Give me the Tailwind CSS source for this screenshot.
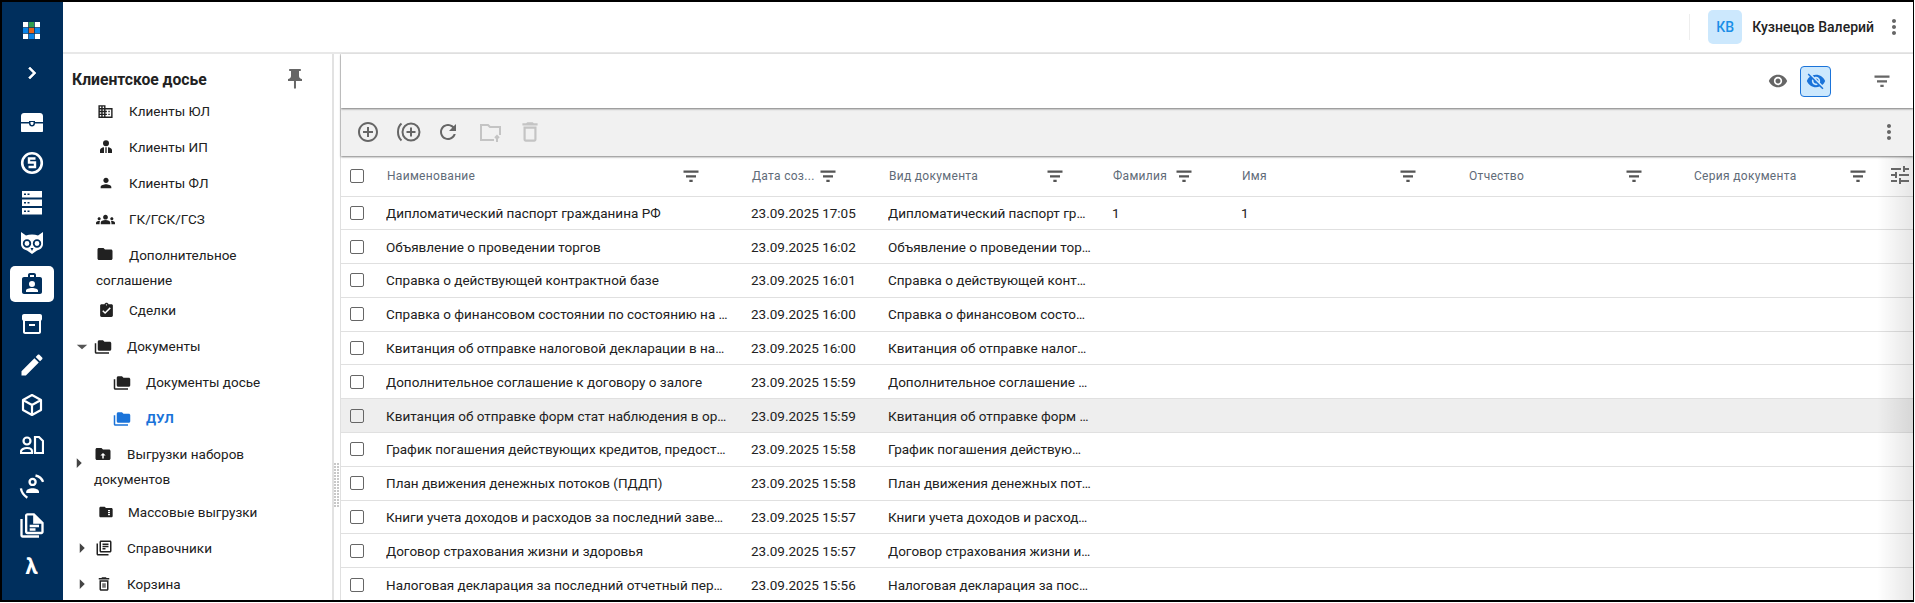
<!DOCTYPE html>
<html lang="en">
<head>
  <meta charset="UTF-8" />
  <title>Клиентское досье</title>
  <script src="https://cdn.jsdelivr.net/npm/@tailwindcss/browser@4"></script>
</head>
<body class="bg-white overflow-hidden font-['Roboto',sans-serif]">

<!-- icon sprite -->
<svg class="hidden">
  <symbol id="filter" viewBox="0 0 24 24"><path d="M3 5.500h18v2.700H3zM6 11h12v2.700H6zM10 16.500h4v2.700h-4z"/></symbol>
  <symbol id="more" viewBox="0 0 24 24"><path d="M12 8c1.100 0 2-.9 2-2s-.9-2-2-2-2 .9-2 2 .9 2 2 2zm0 2c-1.100 0-2 .9-2 2s.9 2 2 2 2-.9 2-2-.9-2-2-2zm0 6c-1.100 0-2 .9-2 2s.9 2 2 2 2-.9 2-2-.9-2-2-2z"/></symbol>
  <symbol id="folders" viewBox="0 0 24 24"><path d="M3 19h17v2H3c-1.100 0-2-.9-2-2V7h2v12zM23 7v8c0 1.100-.9 2-2 2H7c-1.100 0-2-.9-2-2l.01-10c0-1.100.89-2 1.990-2h5l2 2h7c1.100 0 2 .9 2 2z"/></symbol>
  <symbol id="right" viewBox="0 0 24 24"><path d="M9 5.500v13l6.700-6.500z"/></symbol>
  <symbol id="folder" viewBox="0 0 24 24"><path d="M10 4H4c-1.100 0-1.990.9-1.990 2L2 18c0 1.100.9 2 2 2h16c1.100 0 2-.9 2-2V8c0-1.100-.9-2-2-2h-8l-2-2z"/></symbol>
</svg>

<div class="w-[1914px] h-[602px] border-t-2 border-l-2 border-r border-b-2 border-black flex overflow-hidden">

  <!-- Left rail -->
  <nav class="w-[61px] shrink-0 bg-[#002f5d] text-white flex flex-col items-center pr-[2px]">
    <div class="h-[56px] flex items-center justify-center">
      <svg width="17" height="17" viewBox="0 0 17 17">
        <rect width="5.200" height="5.200" fill="#fff"/><rect x="5.900" width="5.200" height="5.200" fill="#2e9e4f"/><rect x="11.800" width="5.200" height="5.200" fill="#fff"/>
        <rect y="5.900" width="5.200" height="5.200" fill="#0a84e6"/><rect x="5.900" y="5.900" width="5.200" height="5.200" fill="#e8641b"/><rect x="11.800" y="5.900" width="5.200" height="5.200" fill="#0a84e6"/>
        <rect y="11.800" width="5.200" height="5.200" fill="#fff"/><rect x="5.900" y="11.800" width="5.200" height="5.200" fill="#0a84e6"/><rect x="11.800" y="11.800" width="5.200" height="5.200" fill="#fff"/>
      </svg>
    </div>
    <div class="h-[30px] flex items-center justify-center">
      <svg class="w-6 h-6" viewBox="0 0 24 24" fill="#fff" stroke="#fff" stroke-width=".6"><path d="M10 6L8.590 7.410 13.170 12l-4.580 4.590L10 18l6-6z"/></svg>
    </div>
    <div class="h-[14px]"></div>

    <div class="h-[40.4px] flex items-center justify-center">
      <svg class="w-[22px] h-[20px]" viewBox="0 0 22 20" fill="#fff"><path d="M3 1h16c1.500 0 3 1 3 3v6h-8V9H8v1H0V4c0-2 1.500-3 3-3zM0 11.500h8c0 1.700 1.300 3 3 3s3-1.300 3-3h8V19c0 .6-.4 1-1 1H1c-.6 0-1-.4-1-1zM9.500 10h3v1.500c0 .8-.7 1.500-1.500 1.500s-1.500-.7-1.500-1.500z"/></svg>
    </div>
    <div class="h-[40.4px] flex items-center justify-center">
      <svg class="w-6 h-6" viewBox="0 0 24 24" fill="none" stroke="#fff"><circle cx="12" cy="12" r="9.800" stroke-width="2.600"/><path d="M15.500 7.500h-6.500v4h6v4.500h-6.500" stroke-width="2.400"/></svg>
    </div>
    <div class="h-[40.4px] flex items-center justify-center">
      <svg class="w-[20px] h-[24px]" viewBox="0 0 20 24" fill="#fff"><path d="M0 0h20v6.500H0zM0 8.500h20V15H0zM0 17h20v6.500H0z"/><path fill="#002f5d" d="M2 2.500h2v1.500H2zM5.500 2.500h2v1.500h-2zM2 11h2v1.500H2zM5.500 11h2v1.500h-2zM2 19.500h2V21H2zM5.500 19.500h2V21h-2z"/></svg>
    </div>
    <div class="h-[40.4px] flex items-center justify-center">
      <svg class="w-6 h-6" viewBox="0 0 24 24"><path fill="#fff" d="M1 1l5 3.500c3.500-1.300 8.500-1.300 12 0L23 1v12c0 3.500-2.500 5.500-6 6.500L12 23l-5-3.500c-3.500-1-6-3-6-6.500z"/><circle cx="7" cy="12.500" r="3.300" fill="none" stroke="#002f5d" stroke-width="1.800"/><circle cx="17" cy="12.500" r="3.300" fill="none" stroke="#002f5d" stroke-width="1.800"/><path fill="#002f5d" d="M10.500 17h3L12 20z"/></svg>
    </div>
    <div class="h-[40.4px] flex items-center justify-center">
      <div class="w-[44px] h-[36px] bg-white rounded-[5px] flex items-center justify-center">
        <svg class="w-6 h-6" viewBox="0 0 24 24" fill="#002f5d"><path fill-rule="evenodd" d="M8 5V3c0-1.100.9-2 2-2h4c1.100 0 2 .9 2 2v2h4c1.100 0 2 .9 2 2v13c0 1.100-.9 2-2 2H4c-1.100 0-2-.9-2-2V7c0-1.100.9-2 2-2zm2 0h4V3h-4zm2 4a3 3 0 1 0 0 6 3 3 0 0 0 0-6zm-6 11h12v-1.500c0-1.500-3-2.500-6-2.500s-6 1-6 2.500z"/></svg>
      </div>
    </div>
    <div class="h-[40.4px] flex items-center justify-center">
      <svg class="w-6 h-6" viewBox="0 0 24 24" fill="#fff"><path d="M20 2H4c-1 0-2 .9-2 2v3.010c0 .72.43 1.340 1 1.690V20c0 1.100 1.100 2 2 2h14c.9 0 2-.9 2-2V8.700c.57-.35 1-.97 1-1.690V4c0-1.100-1-2-2-2zm-1 18H5V9h14zM9 12h6v2H9z"/></svg>
    </div>
    <div class="h-[40.4px] flex items-center justify-center">
      <svg class="w-7 h-7" viewBox="0 0 24 24" fill="#fff"><path d="M3 17.250V21h3.750L17.810 9.940l-3.750-3.750L3 17.250zM20.710 7.040c.39-.39.39-1.020 0-1.410l-2.340-2.340c-.39-.39-1.020-.39-1.410 0l-1.830 1.830 3.750 3.750 1.830-1.830z"/></svg>
    </div>
    <div class="h-[40.4px] flex items-center justify-center">
      <svg class="w-6 h-6" viewBox="0 0 24 24" fill="none" stroke="#fff" stroke-width="2.200" stroke-linejoin="round"><path d="M12 2l9 5v10l-9 5-9-5V7zM3 7l9 5 9-5M12 12v10"/></svg>
    </div>
    <div class="h-[40.4px] flex items-center justify-center">
      <svg class="w-6 h-6" viewBox="0 0 24 24" fill="none" stroke="#fff" stroke-width="2.200"><circle cx="7" cy="8" r="3.500"/><path d="M1 20v-1.500c0-2 3-3.500 6-3.500s5 1 5 3.500V20zM15 20V4h4l4 4v12z"/></svg>
    </div>
    <div class="h-[40.4px] flex items-center justify-center">
      <svg class="w-7 h-7" viewBox="0 0 24 24" fill="none" stroke="#fff" stroke-width="2"><circle cx="12.500" cy="8.500" r="2.600"/><path fill="#fff" stroke="none" d="M7 17c0-2 3-3 5.500-3s5.500 1 5.500 3v1H7z"/><path d="M15 3c3 .7 5.500 2.700 6.500 5.500M2.500 14c.5 3.500 2.500 6 5.500 8"/></svg>
    </div>
    <div class="h-[40.4px] flex items-center justify-center">
      <svg class="w-7 h-7" viewBox="0 0 24 24" fill="#fff"><path d="M4 6H2v14c0 1.100.9 2 2 2h14v-2H4V6zm10-5H8c-1.100 0-2 .9-2 2v14c0 1.100.9 2 2 2h12c1.100 0 2-.9 2-2V9zm6 16H8V3h5v7h7zM10 11h8v2h-8zm0 3h5v2h-5z"/></svg>
    </div>
    <div class="h-[40.4px] flex items-center justify-center text-[22px] font-bold">λ</div>
  </nav>

  <div class="flex-1 flex flex-col min-w-0">

    <!-- Top bar -->
    <header class="h-[52px] shrink-0 border-b-2 border-[#e8e8e8] flex items-center justify-end">
      <div class="w-px h-[26px] bg-[#eeeeee] mr-[18px]"></div>
      <div class="w-[34px] h-[34px] rounded-[5px] bg-[#cce8fd] text-[#1a8fe8] font-medium text-[14px] flex items-center justify-center">КВ</div>
      <span class="ml-[10px] text-[14px] font-medium text-[#222222]">Кузнецов Валерий</span>
      <svg class="w-6 h-6 ml-[8px] mr-[7px] text-[#666666]" fill="currentColor"><use href="#more"/></svg>
    </header>

    <div class="flex-1 flex min-h-0">

      <!-- Tree -->
      <aside class="w-[271px] shrink-0 border-r-2 border-[#e2e2e2] text-[13.500px] leading-[25px] text-[#212121]">
        <div class="h-[39px] pl-[9px] pr-[25px] flex items-center justify-between pt-[11px]">
          <span class="font-bold text-[15.700px] text-[#222222]">Клиентское досье</span>
          <svg class="w-6 h-6 text-[#666666]" viewBox="0 0 24 24" fill="currentColor"><path d="M16 9V4h1c.55 0 1-.45 1-1s-.45-1-1-1H7c-.55 0-1 .45-1 1s.45 1 1 1h1v5c0 1.660-1.340 3-3 3v2h5.970v7l1 1 1-1v-7H19v-2c-1.660 0-3-1.340-3-3z"/></svg>
        </div>
        <ul>
          <li class="h-[36px] pl-[34px] flex items-center">
            <svg class="w-[17px] h-[17px] mr-[15px]" viewBox="0 0 24 24" fill="#212121"><path d="M12 7V3H2v18h20V7H12zM6 19H4v-2h2v2zm0-4H4v-2h2v2zm0-4H4V9h2v2zm0-4H4V5h2v2zm4 12H8v-2h2v2zm0-4H8v-2h2v2zm0-4H8V9h2v2zm0-4H8V5h2v2zm10 12h-8v-2h2v-2h-2v-2h2v-2h-2V9h8v10zm-2-8h-2v2h2v-2zm0 4h-2v2h2v-2z"/></svg>Клиенты ЮЛ</li>
          <li class="h-[36px] pl-[35px] flex items-center">
            <svg class="w-[16px] h-[16px] mr-[15px]" viewBox="0 0 24 24" fill="#212121"><path d="M12 2a4.500 4.500 0 1 1 0 9 4.500 4.500 0 0 1 0-9zM3 21v-4c0-2.500 3-4 6-4.500V21zm8 0v-8.500h2V21zm4 0v-8.500c3 .5 6 2 6 4.500v4z"/></svg>Клиенты ИП</li>
          <li class="h-[36px] pl-[35px] flex items-center">
            <svg class="w-[16px] h-[16px] mr-[15px]" viewBox="0 0 24 24" fill="#212121"><path d="M12 12c2.210 0 4-1.790 4-4s-1.790-4-4-4-4 1.790-4 4 1.790 4 4 4zm0 2c-2.670 0-8 1.340-8 4v2h16v-2c0-2.660-5.330-4-8-4z"/></svg>Клиенты ФЛ</li>
          <li class="h-[36px] pl-[33px] flex items-center">
            <svg class="w-[19px] h-[19px] mr-[14px]" viewBox="0 0 24 24" fill="#212121"><path d="M12 12.750c1.630 0 3.070.39 4.240.9 1.080.48 1.760 1.560 1.760 2.730V18H6v-1.610c0-1.180.68-2.260 1.760-2.730 1.170-.52 2.610-.91 4.240-.91zM4 13c1.100 0 2-.9 2-2s-.9-2-2-2-2 .9-2 2 .9 2 2 2zm1.130 1.100c-.37-.06-.74-.1-1.130-.1-.99 0-1.930.21-2.780.58C.48 14.900 0 15.620 0 16.430V18h4.500v-1.610c0-.83.23-1.610.63-2.290zM20 13c1.100 0 2-.9 2-2s-.9-2-2-2-2 .9-2 2 .9 2 2 2zm4 3.430c0-.81-.48-1.530-1.220-1.850-.85-.37-1.790-.58-2.780-.58-.39 0-.76.04-1.130.1.4.68.63 1.460.63 2.290V18H24v-1.570zM12 6c1.660 0 3 1.340 3 3s-1.340 3-3 3-3-1.340-3-3 1.340-3 3-3z"/></svg>ГК/ГСК/ГСЗ</li>
          <li class="pl-[33px] pt-[5.500px] pr-[20px]">
            <svg class="inline w-[18px] h-[18px] mr-[15px] -mt-[3px]" fill="#212121"><use href="#folder"/></svg>Дополнительное соглашение</li>
          <li class="h-[36px] pl-[35px] flex items-center">
            <svg class="w-[17px] h-[17px] mr-[14px]" viewBox="0 0 24 24" fill="#212121"><path d="M19 3h-4.180C14.400 1.840 13.300 1 12 1c-1.300 0-2.400.84-2.820 2H5c-1.100 0-2 .9-2 2v14c0 1.100.9 2 2 2h14c1.100 0 2-.9 2-2V5c0-1.100-.9-2-2-2zm-7 0c.55 0 1 .45 1 1s-.45 1-1 1-1-.45-1-1 .45-1 1-1zm-2 14l-4-4 1.410-1.410L10 14.170l6.590-6.590L18 9l-8 8z"/></svg>Сделки</li>
          <li class="h-[36px] pl-[10px] flex items-center">
            <svg class="w-[18px] h-[18px] mr-[3px] text-[#555555]" viewBox="0 0 24 24" fill="currentColor"><path d="M5 9h14l-7 6z"/></svg>
            <svg class="w-[18px] h-[18px] mr-[15px]" fill="#212121"><use href="#folders"/></svg>Документы</li>
          <li class="h-[36px] pl-[50px] flex items-center">
            <svg class="w-[18px] h-[18px] mr-[15px]" fill="#212121"><use href="#folders"/></svg>Документы досье</li>
          <li class="h-[36px] pl-[50px] flex items-center font-bold text-[#1a73d9]">
            <svg class="w-[18px] h-[18px] mr-[15px]" fill="#1a73d9"><use href="#folders"/></svg>ДУЛ</li>
          <li class="relative pl-[31px] pt-[5.500px] pb-[2px] pr-[20px]">
            <svg class="absolute left-[7px] top-[17px] w-[18px] h-[18px] text-[#444444]" fill="currentColor"><use href="#right"/></svg>
            <svg class="inline w-[18px] h-[18px] mr-[15px] -mt-[3px]" viewBox="0 0 24 24"><path fill="#212121" d="M10 4H4c-1.100 0-1.990.9-1.990 2L2 18c0 1.100.9 2 2 2h16c1.100 0 2-.9 2-2V8c0-1.100-.9-2-2-2h-8l-2-2z"/><path fill="#fff" d="M13 18h-2v-4H8.500l3.500-3.500 3.500 3.500H13z"/></svg>Выгрузки наборов документов</li>
          <li class="h-[36px] pl-[35px] flex items-center">
            <svg class="w-[16px] h-[18px] mr-[14px]" viewBox="0 0 24 24"><path fill="#212121" d="M10 4H4c-1.100 0-1.990.9-1.990 2L2 18c0 1.100.9 2 2 2h16c1.100 0 2-.9 2-2V8c0-1.100-.9-2-2-2h-8l-2-2z"/><path fill="#fff" d="M15 9h3v2h-3zM15 12h3v2h-3zM15 15h3v2h-3z"/></svg>Массовые выгрузки</li>
          <li class="h-[36px] pl-[10px] flex items-center">
            <svg class="w-[18px] h-[18px] mr-[4px] text-[#444444]" fill="currentColor"><use href="#right"/></svg>
            <svg class="w-[18px] h-[18px] mr-[14px]" viewBox="0 0 24 24" fill="#212121"><path d="M4 6H2v14c0 1.100.9 2 2 2h14v-2H4V6zm16-4H8c-1.100 0-2 .9-2 2v12c0 1.100.9 2 2 2h12c1.100 0 2-.9 2-2V4c0-1.100-.9-2-2-2zm0 14H8V4h12v12zM10 9h8v2h-8zm0 3h4v2h-4zm0-6h8v2h-8z"/></svg>Справочники</li>
          <li class="h-[36px] pl-[10px] flex items-center">
            <svg class="w-[18px] h-[18px] mr-[4px] text-[#444444]" fill="currentColor"><use href="#right"/></svg>
            <svg class="w-[18px] h-[18px] mr-[14px]" viewBox="0 0 24 24" fill="#212121"><path d="M6 19c0 1.100.9 2 2 2h8c1.100 0 2-.9 2-2V7H6v12zM8 9h8v10H8V9zm7.500-5l-1-1h-5l-1 1H5v2h14V4h-3.500zM10 11h1.500v6H10zM12.500 11H14v6h-1.500z"/></svg>Корзина</li>
        </ul>
      </aside>

      <!-- Splitter -->
      <div class="w-[6px] shrink-0 flex flex-col justify-end pb-[93px]">
        <svg class="w-[6px] h-[44px]"><defs><pattern id="grip" width="3" height="3" patternUnits="userSpaceOnUse"><rect width="2" height="2" fill="#c8c8c8"/></pattern></defs><rect width="6" height="44" fill="url(#grip)"/></svg>
      </div>

      <!-- Main -->
      <main class="flex-1 min-w-0 border-l border-[#e0e0e0] flex flex-col">
        <div class="h-[54px] shrink-0 flex items-center justify-end relative z-20 shadow-[0_1px_2px_rgba(0,0,0,0.5)] bg-white">
          <svg class="w-[20px] h-[20px] mr-[12px] text-[#666666]" viewBox="0 0 24 24" fill="currentColor"><path d="M12 4.500C7 4.500 2.730 7.610 1 12c1.730 4.390 6 7.500 11 7.500s9.270-3.110 11-7.500c-1.730-4.390-6-7.500-11-7.500zM12 17c-2.760 0-5-2.240-5-5s2.240-5 5-5 5 2.240 5 5-2.240 5-5 5zm0-8c-1.660 0-3 1.340-3 3s1.340 3 3 3 3-1.340 3-3-1.340-3-3-3z"/></svg>
          <div class="w-[31px] h-[31px] rounded-[4px] border border-[#1a73d9] bg-[#cce8fd] flex items-center justify-center">
            <svg class="w-[20px] h-[20px] text-[#1a73d9]" viewBox="0 0 24 24" fill="currentColor"><path d="M12 7c2.760 0 5 2.240 5 5 0 .65-.13 1.260-.36 1.830l2.920 2.920c1.510-1.260 2.700-2.890 3.430-4.750-1.730-4.390-6-7.500-11-7.500-1.400 0-2.740.25-3.980.7l2.160 2.160C10.740 7.130 11.350 7 12 7zM2 4.270l2.280 2.280.46.46C3.080 8.300 1.780 10.020 1 12c1.730 4.390 6 7.500 11 7.500 1.550 0 3.030-.3 4.380-.84l.42.42L19.730 22 21 20.730 3.270 3 2 4.270zM7.530 9.800l1.550 1.550c-.05.21-.08.43-.08.65 0 1.660 1.340 3 3 3 .22 0 .44-.03.65-.08l1.550 1.550c-.67.33-1.410.53-2.200.53-2.760 0-5-2.240-5-5 0-.79.2-1.530.53-2.200zm4.310-.78l3.150 3.150.02-.16c0-1.660-1.340-3-3-3l-.17.01z"/></svg>
          </div>
          <svg class="w-[20px] h-[20px] ml-[41px] mr-[21px] text-[#666666]" fill="currentColor"><use href="#filter"/></svg>
        </div>

        <!-- Toolbar -->
        <div class="h-[48px] shrink-0 bg-[#f1f1f1] flex items-center relative z-10 shadow-[0_1px_2px_rgba(0,0,0,0.5)] pl-[15px] pr-[12px]">
          <svg class="w-6 h-6 text-[#666666]" viewBox="0 0 24 24" fill="currentColor"><path d="M13 7h-2v4H7v2h4v4h2v-4h4v-2h-4V7zm-1-5C6.480 2 2 6.480 2 12s4.480 10 10 10 10-4.480 10-10S17.520 2 12 2zm0 18c-4.410 0-8-3.590-8-8s3.590-8 8-8 8 3.590 8 8-3.590 8-8 8z"/></svg>
          <svg class="w-[26px] h-[24px] ml-[16px] text-[#666666]" viewBox="0 0 26 24" fill="none" stroke="currentColor" stroke-width="2"><circle cx="15" cy="12" r="8.500"/><path d="M15 7.500v9M10.500 12h9M5.500 3.500C3.200 5.500 2 8.500 2 12s1.200 6.500 3.500 8.500"/></svg>
          <svg class="w-6 h-6 ml-[14px] text-[#666666]" viewBox="0 0 24 24" fill="currentColor"><path d="M17.650 6.350C16.200 4.900 14.210 4 12 4c-4.420 0-7.990 3.580-7.990 8s3.570 8 7.990 8c3.730 0 6.840-2.550 7.730-6h-2.080c-.82 2.330-3.040 4-5.650 4-3.310 0-6-2.690-6-6s2.690-6 6-6c1.660 0 3.140.69 4.220 1.780L13 11h7V4l-2.350 2.350z"/></svg>
          <svg class="w-6 h-6 ml-[18px] text-[#c4c4c4]" viewBox="0 0 24 24" fill="none" stroke="currentColor" stroke-width="2"><path d="M16 20H3V5h7l2 2h10v8M19 22v-6M17 18l2-2 2 2"/></svg>
          <svg class="w-[26px] h-[26px] ml-[15px] text-[#c4c4c4]" viewBox="0 0 24 24" fill="currentColor"><path d="M6 19c0 1.100.9 2 2 2h8c1.100 0 2-.9 2-2V7H6v12zM8 9h8v10H8V9zm7.500-5l-1-1h-5l-1 1H5v2h14V4h-3.500z"/></svg>
          <svg class="w-6 h-6 ml-auto text-[#666666]" fill="currentColor"><use href="#more"/></svg>
        </div>

        <!-- Table -->
        <div class="flex-1 min-h-0 overflow-hidden relative">
          <table class="table-fixed border-collapse w-[1572px] text-[13.500px] text-[#212121]">
            <colgroup><col class="w-[45px]"><col class="w-[365px]"><col class="w-[137px]"><col class="w-[224px]"><col class="w-[129px]"><col class="w-[227px]"><col class="w-[225px]"><col class="w-[220px]"></colgroup>
            <thead class="text-[12px] tracking-[0.3px] text-[#5f6b78] font-normal">
              <tr class="h-[40px] border-b border-[#e0e0e0]">
                <th class="pl-[9px] text-left"><span class="block w-[14px] h-[14px] border border-[#666666] rounded-[2px]"></span></th>
                <th class="font-normal text-left pl-px"><div class="flex items-center justify-between pr-[50px]">Наименование<svg class="w-[20px] h-[20px] text-[#555555]" fill="currentColor"><use href="#filter"/></svg></div></th>
                <th class="font-normal text-left pl-px"><div class="flex items-center justify-between pr-[50px]">Дата соз...<svg class="w-[20px] h-[20px] text-[#555555]" fill="currentColor"><use href="#filter"/></svg></div></th>
                <th class="font-normal text-left pl-px"><div class="flex items-center justify-between pr-[47px]">Вид документа<svg class="w-[20px] h-[20px] text-[#555555]" fill="currentColor"><use href="#filter"/></svg></div></th>
                <th class="font-normal text-left pl-px"><div class="flex items-center justify-between pr-[47px]">Фамилия<svg class="w-[20px] h-[20px] text-[#555555]" fill="currentColor"><use href="#filter"/></svg></div></th>
                <th class="font-normal text-left pl-px"><div class="flex items-center justify-between pr-[50px]">Имя<svg class="w-[20px] h-[20px] text-[#555555]" fill="currentColor"><use href="#filter"/></svg></div></th>
                <th class="font-normal text-left pl-px"><div class="flex items-center justify-between pr-[49px]">Отчество<svg class="w-[20px] h-[20px] text-[#555555]" fill="currentColor"><use href="#filter"/></svg></div></th>
                <th class="font-normal text-left pl-px"><div class="flex items-center justify-between pr-[45px]">Серия документа<svg class="w-[20px] h-[20px] text-[#555555]" fill="currentColor"><use href="#filter"/></svg></div></th>
              </tr>
            </thead>
            <tbody id="rows"></tbody>
          </table>
          <!-- column settings sits over the table's right edge -->
          <div class="absolute right-0 top-0 bottom-0 w-[36px] bg-gradient-to-r from-transparent to-black/10 flex justify-end pointer-events-none">
            <svg class="w-[24px] h-[24px] mt-[7px] mr-[1px] text-[#666666]" viewBox="0 0 24 24" fill="currentColor"><path d="M3 17v2h6v-2H3zM3 5v2h10V5H3zm10 16v-2h8v-2h-8v-2h-2v6h2zM7 9v2H3v2h4v2h2V9H7zm14 4v-2H11v2h10zm-6-4h2V7h4V5h-4V3h-2v6z"/></svg>
          </div>
        </div>
      </main>
    </div>
  </div>
</div>

<script>
  const data = [
    ["Дипломатический паспорт гражданина РФ", "23.09.2025 17:05", "1", "1"],
    ["Объявление о проведении торгов", "23.09.2025 16:02"],
    ["Справка о действующей контрактной базе", "23.09.2025 16:01"],
    ["Справка о финансовом состоянии по состоянию на последнюю дату", "23.09.2025 16:00"],
    ["Квитанция об отправке налоговой декларации в налоговый орган", "23.09.2025 16:00"],
    ["Дополнительное соглашение к договору о залоге", "23.09.2025 15:59"],
    ["Квитанция об отправке форм стат наблюдения в органы статистики", "23.09.2025 15:59"],
    ["График погашения действующих кредитов, предоставленных банком", "23.09.2025 15:58"],
    ["План движения денежных потоков (ПДДП)", "23.09.2025 15:58"],
    ["Книги учета доходов и расходов за последний завершенный год", "23.09.2025 15:57"],
    ["Договор страхования жизни и здоровья", "23.09.2025 15:57"],
    ["Налоговая декларация за последний отчетный период", "23.09.2025 15:56"],
  ];
  document.getElementById("rows").innerHTML = data.map((r, i) => `
    <tr class="h-[33.800px] border-b border-[#e0e0e0] ${i === 6 ? "bg-[#eeeeee]" : ""}">
      <td class="pl-[9px]"><span class="block w-[14px] h-[14px] border border-[#666666] rounded-[2px]"></span></td>
      <td class="truncate pr-[22px]">${r[0]}</td>
      <td class="truncate pr-[22px]">${r[1]}</td>
      <td class="truncate pr-[20.500px]">${r[0]}</td>
      <td>${r[2] || ""}</td>
      <td>${r[3] || ""}</td>
      <td></td><td></td>
    </tr>`).join("");
</script>
</body>
</html>
